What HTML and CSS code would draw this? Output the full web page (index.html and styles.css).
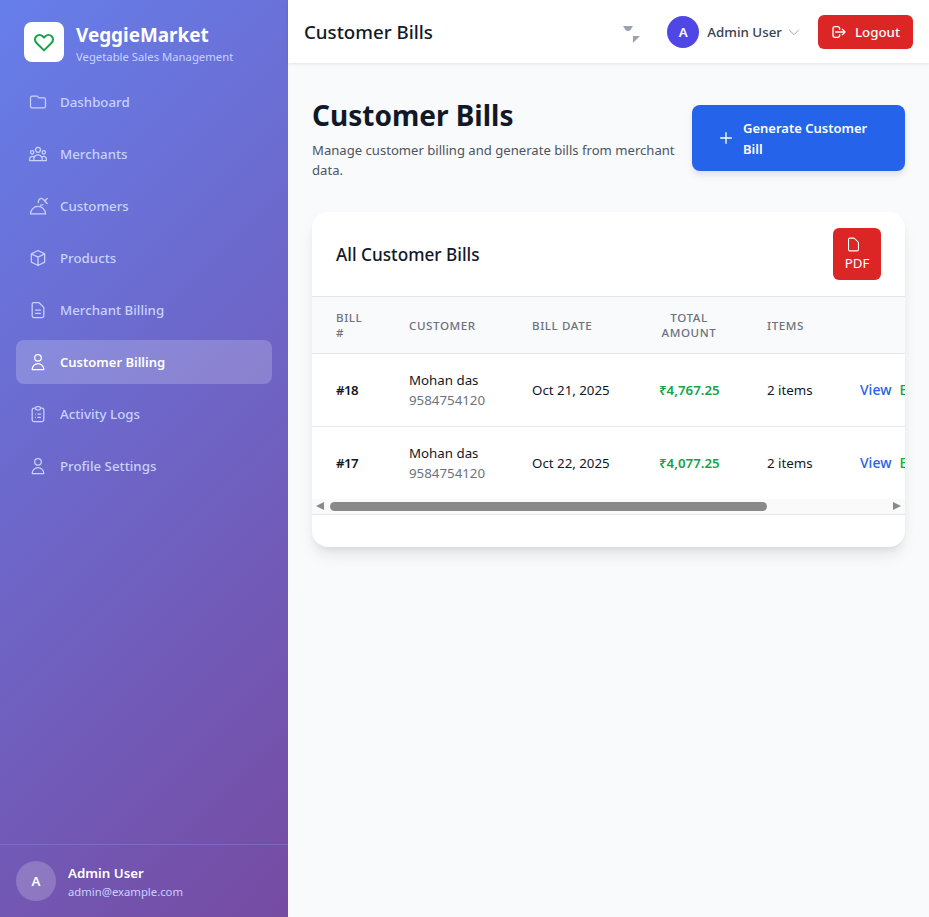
FILE: index.html
```html
<!DOCTYPE html>
<html lang="en">

<head>
    <meta charset="UTF-8">
    <meta name="viewport" content="width=device-width, initial-scale=1.0">
    <title>Customer Bills</title>
    <link rel="stylesheet" href="styles.css">
</head>

<body>
    <aside class="sidebar">
        <div class="brand">
            <div class="brand-logo">
                <svg viewBox="0 0 24 24" class="icon-heart"><path d="M4.318 6.318a4.5 4.5 0 000 6.364L12 20.364l7.682-7.682a4.5 4.5 0 00-6.364-6.364L12 7.636l-1.318-1.318a4.5 4.5 0 00-6.364 0z"/></svg>
            </div>
            <div class="brand-text">
                <div class="brand-name">VeggieMarket</div>
                <div class="brand-tag">Vegetable Sales Management</div>
            </div>
        </div>

        <nav class="nav">
            <a class="nav-item" href="#">
                <svg viewBox="0 0 24 24"><path d="M3 7v10a2 2 0 002 2h14a2 2 0 002-2V9a2 2 0 00-2-2h-6l-2-2H5a2 2 0 00-2 2z"/></svg>
                Dashboard
            </a>
            <a class="nav-item" href="#">
                <svg viewBox="0 0 24 24"><path d="M17 20h5v-2a3 3 0 00-5.356-1.857M17 20H7m10 0v-2c0-.656-.126-1.283-.356-1.857M7 20H2v-2a3 3 0 015.356-1.857M7 20v-2c0-.656.126-1.283.356-1.857m0 0a5.002 5.002 0 019.288 0M15 7a3 3 0 11-6 0 3 3 0 016 0zm6 3a2 2 0 11-4 0 2 2 0 014 0zM7 10a2 2 0 11-4 0 2 2 0 014 0z"/></svg>
                Merchants
            </a>
            <a class="nav-item" href="#">
                <svg viewBox="0 0 24 24"><path d="M3 21.500a9 9 0 0118 0zM12.500 8a4 4 0 014-5q2 0 3 2.500M20 6l3-3M20 6l3 3M18 10.500q-1 .5-3 .5"/></svg>
                Customers
            </a>
            <a class="nav-item" href="#">
                <svg viewBox="0 0 24 24"><path d="M20 7l-8-4-8 4m16 0l-8 4m8-4v10l-8 4m0-10L4 7m8 4v10M4 7v10l8 4"/></svg>
                Products
            </a>
            <a class="nav-item" href="#">
                <svg viewBox="0 0 24 24"><path d="M9 12h6m-6 4h6m2 5H7a2 2 0 01-2-2V5a2 2 0 012-2h5.586a1 1 0 01.707.293l5.414 5.414a1 1 0 01.293.707V19a2 2 0 01-2 2z"/></svg>
                Merchant Billing
            </a>
            <a class="nav-item active" href="#">
                <svg viewBox="0 0 24 24"><path d="M16 7a4 4 0 11-8 0 4 4 0 018 0zM12 14a7 7 0 00-7 7h14a7 7 0 00-7-7z"/></svg>
                Customer Billing
            </a>
            <a class="nav-item" href="#">
                <svg viewBox="0 0 24 24"><path d="M9 5H7a2 2 0 00-2 2v12a2 2 0 002 2h10a2 2 0 002-2V7a2 2 0 00-2-2h-2M9 5a2 2 0 002 2h2a2 2 0 002-2M9 5a2 2 0 012-2h2a2 2 0 012 2m-3 7h3m-3 4h3m-6-4h.01M9 16h.01"/></svg>
                Activity Logs
            </a>
            <a class="nav-item" href="#">
                <svg viewBox="0 0 24 24"><path d="M16 7a4 4 0 11-8 0 4 4 0 018 0zM12 14a7 7 0 00-7 7h14a7 7 0 00-7-7z"/></svg>
                Profile Settings
            </a>
        </nav>

        <div class="sidebar-user">
            <div class="sidebar-avatar">A</div>
            <div>
                <div class="sidebar-user-name">Admin User</div>
                <div class="sidebar-user-mail">admin@example.com</div>
            </div>
        </div>
    </aside>

    <div class="content">
        <header class="topbar">
            <h1 class="topbar-title">Customer Bills</h1>
            <div class="topbar-right">
                <!-- clipped bell icon, only two corners show -->
                <svg class="broken-icon" viewBox="0 0 17 17"><path d="M0 0h10l-2.500 4q-1 1-2.500 1t-2.500-1z"/><path d="M10 10h7l-7 7z"/></svg>
                <div class="user-menu">
                    <div class="user-avatar">A</div>
                    <span class="user-name">Admin User</span>
                    <svg class="chevron" viewBox="0 0 24 24"><path d="M19 9l-7 7-7-7"/></svg>
                </div>
                <a class="logout-btn" href="#">
                    <svg viewBox="0 0 24 24"><path d="M17 16l4-4m0 0l-4-4m4 4H7m6 4v1a3 3 0 01-3 3H6a3 3 0 01-3-3V7a3 3 0 013-3h4a3 3 0 013 3v1"/></svg>
                    Logout
                </a>
            </div>
        </header>

        <main class="main">
            <div class="page-head">
                <div class="page-head-text">
                    <h2>Customer Bills</h2>
                    <p>Manage customer billing and generate bills from merchant data.</p>
                </div>
                <a class="generate-btn" href="#">
                    <svg viewBox="0 0 24 24"><path d="M12 4v16m8-8H4"/></svg>
                    <span>Generate Customer Bill</span>
                </a>
            </div>

            <section class="card">
                <div class="card-head">
                    <h3>All Customer Bills</h3>
                    <a class="pdf-btn" href="#">
                        <svg viewBox="0 0 24 24"><path d="M7 21h10a2 2 0 002-2V9.414a1 1 0 00-.293-.707l-5.414-5.414A1 1 0 0012.586 3H7a2 2 0 00-2 2v14a2 2 0 002 2z"/></svg>
                        PDF
                    </a>
                </div>

                <div class="table-wrap">
                    <table class="bills">
                        <colgroup>
                            <col class="col-bill">
                            <col class="col-customer">
                            <col class="col-date">
                            <col class="col-total">
                            <col class="col-items">
                            <col class="col-actions">
                        </colgroup>
                        <thead>
                            <tr>
                                <th>Bill #</th>
                                <th>Customer</th>
                                <th>Bill Date</th>
                                <th class="center">Total Amount</th>
                                <th>Items</th>
                                <th></th>
                            </tr>
                        </thead>
                        <tbody>
                            <tr>
                                <td class="bill-no">#18</td>
                                <td>Mohan das<div class="phone">9584754120</div></td>
                                <td>Oct 21, 2025</td>
                                <td class="amount">₹4,767.25</td>
                                <td>2 items</td>
                                <td class="actions"><a class="view" href="#">View</a><a class="edit" href="#">Edit</a><a class="del" href="#">Delete</a></td>
                            </tr>
                            <tr>
                                <td class="bill-no">#17</td>
                                <td>Mohan das<div class="phone">9584754120</div></td>
                                <td>Oct 22, 2025</td>
                                <td class="amount">₹4,077.25</td>
                                <td>2 items</td>
                                <td class="actions"><a class="view" href="#">View</a><a class="edit" href="#">Edit</a><a class="del" href="#">Delete</a></td>
                            </tr>
                        </tbody>
                    </table>
                </div>

                <!-- the table scrolls sideways, screenshots don't show a native bar -->
                <div class="scrollbar">
                    <span class="arrow-left"></span>
                    <span class="scroll-track"><span class="scroll-thumb"></span></span>
                    <span class="arrow-right"></span>
                </div>
                <div class="card-foot"></div>
            </section>
        </main>
    </div>
</body>

</html>
```
FILE: styles.css
```css
* {
    box-sizing: border-box;
}

body {
    font-family: 'Noto Sans', sans-serif;
    margin: 0;
    display: flex;
    height: 100vh;
    overflow: hidden;
    background-color: #f9fafb;
    color: #111827;
    font-size: 13.3px;
}

a {
    text-decoration: none;
}

svg {
    fill: none;
    stroke: currentColor;
    stroke-width: 2;
    stroke-linecap: round;
    stroke-linejoin: round;
    flex-shrink: 0;
}

/* sidebar */
.sidebar {
    width: 288px;
    flex-shrink: 0;
    display: flex;
    flex-direction: column;
    background: linear-gradient(135deg, #667eea 0%, #764ba2 100%);
}

.brand {
    display: flex;
    align-items: center;
    gap: 12px;
    height: 80px;
    padding: 4px 24px 0;
}

.brand-logo {
    width: 40px;
    height: 40px;
    background: white;
    border-radius: 8px;
    display: flex;
    align-items: center;
    justify-content: center;
}

.icon-heart {
    width: 24px;
    height: 24px;
    color: #16a34a;
}

.brand-text {
    padding-top: 2px;
}

.brand-name {
    color: white;
    font-size: 18.9px;
    font-weight: 700;
    line-height: 28px;
}

.brand-tag {
    color: #c7d2fe;
    font-size: 11.3px;
    line-height: 16px;
}

.nav {
    flex: 1;
    display: flex;
    flex-direction: column;
    gap: 8px;
    padding: 0 16px;
}

.nav-item {
    display: flex;
    align-items: center;
    gap: 12px;
    height: 44px;
    padding: 0 12px;
    border-radius: 8px;
    color: #c7d2fe;
    font-weight: 500;
}

.nav-item svg {
    width: 20px;
    height: 20px;
    stroke-width: 1.5;
}

.nav-item.active {
    background: rgba(255, 255, 255, 0.2);
    color: white;
    font-size: 13px;
    font-weight: 600;
}

.sidebar-user {
    display: flex;
    align-items: center;
    gap: 12px;
    height: 73px;
    padding: 0 16px;
    border-top: 1px solid rgba(129, 140, 248, 0.4);
}

.sidebar-avatar {
    width: 40px;
    height: 40px;
    border-radius: 50%;
    background: rgba(255, 255, 255, 0.2);
    color: white;
    font-weight: 600;
    display: flex;
    align-items: center;
    justify-content: center;
}

.sidebar-user-name {
    color: white;
    font-weight: 600;
    line-height: 22px;
}

.sidebar-user-mail {
    color: #c7d2fe;
    font-size: 11.3px;
    line-height: 16px;
}

/* top bar */
.content {
    flex: 1;
    min-width: 0;
    display: flex;
    flex-direction: column;
}

.topbar {
    height: 63px;
    flex-shrink: 0;
    display: flex;
    align-items: center;
    justify-content: space-between;
    padding: 1px 16px 0;
    background: white;
    box-shadow: 0 1px 3px rgba(0, 0, 0, 0.1);
}

.topbar-title {
    margin: 0 0 1px;
    font-size: 18.7px;
    font-weight: 500;
}

.topbar-right {
    display: flex;
    align-items: center;
}

.broken-icon {
    width: 17px;
    height: 17px;
    margin: 5px 27px 0 0;
    fill: #9ca3af;
    stroke: none;
}

.user-menu {
    display: flex;
    align-items: center;
    margin-right: 16px;
}

.user-avatar {
    width: 32px;
    height: 32px;
    border-radius: 50%;
    background: #4f46e5;
    color: white;
    font-weight: 600;
    display: flex;
    align-items: center;
    justify-content: center;
    margin-right: 8px;
}

.user-name {
    color: #374151;
    font-size: 13.35px;
    font-weight: 500;
}

.chevron {
    width: 16px;
    height: 16px;
    margin-left: 4px;
    color: #9ca3af;
    stroke-width: 1.5;
}

.logout-btn {
    display: flex;
    align-items: center;
    gap: 8px;
    height: 34px;
    padding: 0 13px;
    border-radius: 6px;
    background: #dc2626;
    color: white;
    font-weight: 500;
}

.logout-btn svg {
    width: 16px;
    height: 16px;
}

/* page */
.main {
    flex: 1;
    padding: 33px 24px 24px;
    min-width: 0;
}

.page-head {
    display: flex;
    justify-content: space-between;
    gap: 8px;
    margin-bottom: 32px;
}

.page-head h2 {
    margin: 0 0 6px;
    font-size: 28px;
    line-height: 38px;
    font-weight: 700;
}

.page-head p {
    margin: 0;
    color: #4b5563;
    font-size: 13.1px;
    line-height: 20px;
}

.generate-btn {
    width: 213px;
    height: 66px;
    flex-shrink: 0;
    margin-top: 9px;
    display: flex;
    align-items: center;
    gap: 9px;
    padding: 0 24px 0 26px;
    border-radius: 8px;
    background: #2563eb;
    color: white;
    font-size: 13px;
    font-weight: 600;
    line-height: 21px;
    box-shadow: 0 4px 6px rgba(0, 0, 0, 0.1);
}

.generate-btn svg {
    width: 16px;
    height: 16px;
}

.generate-btn span {
    padding-top: 1px;
}

/* card with the table */
.card {
    background: white;
    border-radius: 16px;
    box-shadow: 0 10px 15px -3px rgba(0, 0, 0, 0.1), 0 4px 6px -2px rgba(0, 0, 0, 0.05);
    overflow: hidden;
}

.card-head {
    height: 85px;
    display: flex;
    align-items: center;
    justify-content: space-between;
    padding: 0 24px;
    border-bottom: 1px solid #e5e7eb;
}

.card-head h3 {
    margin: 0;
    font-size: 17.2px;
    font-weight: 500;
}

.pdf-btn {
    width: 48px;
    height: 52px;
    display: flex;
    flex-direction: column;
    align-items: center;
    justify-content: center;
    border-radius: 6px;
    background: #dc2626;
    color: white;
    line-height: 20px;
}

.pdf-btn svg {
    width: 17px;
    height: 17px;
    margin-right: 8px;
    stroke-width: 1.5;
}

.table-wrap {
    overflow: hidden;
}

.bills {
    width: 760px;
    table-layout: fixed;
    border-collapse: separate;
    border-spacing: 0;
}

.col-bill { width: 73px; }
.col-customer { width: 123px; }
.col-date { width: 127px; }
.col-total { width: 108px; }
.col-items { width: 93px; }
.col-actions { width: 236px; }

.bills th {
    height: 57px;
    padding: 0 24px;
    background: #f9fafb;
    border-bottom: 1px solid #e5e7eb;
    color: #6b7280;
    font-size: 11.6px;
    font-weight: 500;
    line-height: 15px;
    letter-spacing: 0.05em;
    text-transform: uppercase;
    text-align: left;
}

.bills th.center {
    text-align: center;
}

.bills td {
    height: 73px;
    padding: 0 24px;
    border-bottom: 1px solid #e5e7eb;
    line-height: 20px;
    white-space: nowrap;
}

.bills tbody tr:last-child td {
    height: 72px;
    border-bottom: none;
}

.bills td.bill-no {
    font-weight: 600;
    letter-spacing: -0.6px;
}

.phone {
    color: #6b7280;
}

.amount {
    color: #16a34a;
    font-weight: 600;
}

.actions a {
    font-size: 14px;
    font-weight: 500;
    margin-right: 8px;
}

.view { color: #2563eb; }
.edit { color: #16a34a; }
.del { color: #dc2626; }

/* sideways scrollbar under the table */
.scrollbar {
    height: 16px;
    display: flex;
    align-items: center;
    gap: 6px;
    padding: 0 4px 1px;
    background: #fafafa;
    border-bottom: 1px solid #e5e7eb;
}

.arrow-left,
.arrow-right {
    flex-shrink: 0;
    width: 0;
    height: 0;
    border-top: 4px solid transparent;
    border-bottom: 4px solid transparent;
}

.arrow-left {
    border-right: 8px solid #8a8a8a;
}

.arrow-right {
    border-left: 8px solid #8a8a8a;
}

.scroll-track {
    flex: 1;
}

.scroll-thumb {
    display: block;
    width: 437px;
    height: 9px;
    border-radius: 5px;
    background: #8a8a8a;
}

.card-foot {
    height: 32px;
}
```
